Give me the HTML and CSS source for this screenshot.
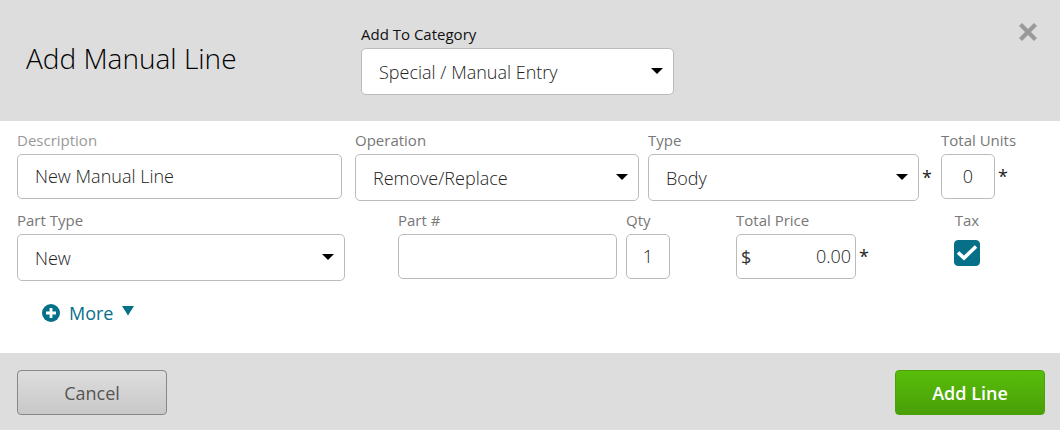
FILE: index.html
```
<!DOCTYPE html>
<html lang="en">
<head>
    <meta charset="UTF-8">
    <meta name="viewport" content="width=device-width, initial-scale=1.0">
    <title>Add Manual Line</title>
    <link rel="stylesheet" href="styles.css">
</head>
<body>
    <form class="dialog">
        <!-- Header -->
        <header class="dialog-header">
            <h1 class="dialog-title">Add Manual Line</h1>
            <div class="field category">
                <label for="category">Add To Category</label>
                <div class="select-wrap">
                    <select id="category" name="category">
                        <option>Special / Manual Entry</option>
                    </select>
                </div>
            </div>
            <button type="button" class="close-button" aria-label="Close">
                <svg width="20" height="20" viewBox="0 0 20 20">
                    <path d="M2.500 2.500L17.500 17.500M17.500 2.500L2.500 17.500" stroke="#999" stroke-width="4.200" fill="none"/>
                </svg>
            </button>
        </header>

        <!-- Line fields -->
        <main class="dialog-body">
            <div class="row row-operation">
                <div class="field description">
                    <label for="description">Description</label>
                    <input type="text" id="description" name="description" value="New Manual Line">
                </div>
                <div class="field">
                    <label for="operation">Operation</label>
                    <div class="select-wrap">
                        <select id="operation" name="operation">
                            <option>Remove/Replace</option>
                        </select>
                    </div>
                </div>
                <div class="field">
                    <label for="type">Type</label>
                    <div class="control">
                        <div class="select-wrap">
                            <select id="type" name="type">
                                <option>Body</option>
                            </select>
                        </div>
                        <span class="required">*</span>
                    </div>
                </div>
                <div class="field">
                    <label for="units">Total Units</label>
                    <div class="control">
                        <input type="text" id="units" name="units" class="units" value="0">
                        <span class="required">*</span>
                    </div>
                </div>
            </div>

            <div class="row row-part">
                <div class="field part-type">
                    <label for="part-type">Part Type</label>
                    <div class="select-wrap">
                        <select id="part-type" name="part-type">
                            <option>New</option>
                        </select>
                    </div>
                </div>
                <div class="field">
                    <label for="part-number">Part #</label>
                    <input type="text" id="part-number" name="part-number">
                </div>
                <div class="field">
                    <label for="qty">Qty</label>
                    <input type="text" id="qty" name="qty" class="qty" value="1">
                </div>
                <div class="field price">
                    <label for="price">Total Price</label>
                    <div class="control">
                        <div class="price-box">
                            <span>$</span>
                            <input type="text" id="price" name="price" value="0.00">
                        </div>
                        <span class="required">*</span>
                    </div>
                </div>
                <div class="field tax">
                    <label for="tax">Tax</label>
                    <div class="checkbox">
                        <input type="checkbox" id="tax" name="tax" checked>
                        <svg width="26" height="26" viewBox="0 0 26 26">
                            <path d="M4 12.500L10 18L22 6.500" stroke="#fff" stroke-width="3.600" fill="none"/>
                        </svg>
                    </div>
                </div>
            </div>

            <button type="button" class="more-button">
                <svg width="18" height="18" viewBox="0 0 18 18">
                    <circle cx="9" cy="9" r="9" fill="#077089"/>
                    <path d="M9 4V14M4 9H14" stroke="#fff" stroke-width="2.800"/>
                </svg>
                <span>More</span>
                <svg class="more-arrow" width="12" height="10" viewBox="0 0 12 10">
                    <path d="M0 0H12L6 9.500Z" fill="#077089"/>
                </svg>
            </button>
        </main>

        <!-- Footer -->
        <footer class="dialog-footer">
            <button type="button" class="button cancel">Cancel</button>
            <button type="submit" class="button submit">Add Line</button>
        </footer>
    </form>
</body>
</html>
```
FILE: styles.css
```
* {
    box-sizing: border-box;
}

body {
    margin: 0;
    font-family: "Open Sans", sans-serif;
    font-size: 18px;
    color: #333;
    background-color: #fff;
}

.dialog {
    display: flex;
    flex-direction: column;
    min-height: 100vh;
}

/* Header */
.dialog-header {
    display: grid;
    grid-template-columns: 335fr 313fr 364fr;
    padding: 22px 22px 26px 26px;
    background-color: #ddd;
}

.dialog-title {
    align-self: center;
    margin: 0;
    padding-bottom: 2px;
    font-size: 28px;
    font-weight: 350;
    line-height: 40px;
    color: #000;
}

.category {
    padding-top: 2px;
}

.category label {
    color: #111;
}

.close-button {
    align-self: start;
    justify-self: end;
    display: flex;
    padding: 0;
    border: none;
    background: none;
    cursor: pointer;
}

/* Fields */
.field label {
    display: block;
    margin-bottom: 4px;
    font-size: 15px;
    line-height: 20px;
}

.dialog-body {
    padding: 9px 15px 27px 17px;
}

.dialog-body label {
    color: #777;
}

.dialog-body .description label {
    color: #999;
}

.row {
    display: grid;
    column-gap: 9px;
    margin-bottom: 9px;
}

.row-operation {
    grid-template-columns: 329fr 284fr 284fr 104px;
}

.row-part {
    grid-template-columns: 372fr 219fr 44px 201px 156px;
}

input,
select {
    font-family: inherit;
    font-size: 18px;
    font-weight: 350;
    color: #222;
}

input[type="text"],
select {
    display: block;
    width: 100%;
    height: 45px;
    padding: 0 17px 1px;
    border: 1px solid #bbb;
    border-radius: 5px;
    background-color: #fff;
}

select {
    height: 47px;
    padding-bottom: 0;
    appearance: none;
}

.select-wrap {
    position: relative;
    flex: 1;
}

.select-wrap::after {
    content: "";
    position: absolute;
    top: 20px;
    right: 11px;
    border: 6px solid transparent;
    border-top-color: #000;
    border-bottom: none;
    pointer-events: none;
}

.control {
    display: flex;
    gap: 3px;
}

.required {
    align-self: center;
    padding-bottom: 1px;
    line-height: 24px;
    color: #222;
}

.description {
    padding-right: 4px;
}

input[type="text"].units {
    width: 54px;
    padding: 0 0 1px;
    text-align: center;
}

input[type="text"].qty {
    padding: 0 0 1px;
    text-align: center;
}

.part-type {
    padding-right: 44px;
}

.price {
    padding-left: 57px;
}

.price-box {
    display: flex;
    align-items: center;
    width: 120px;
    height: 45px;
    padding: 0 4px;
    border: 1px solid #bbb;
    border-radius: 5px;
}

.price-box input[type="text"] {
    flex: 1;
    min-width: 0;
    height: 43px;
    padding: 0 0 1px;
    border: none;
    text-align: right;
}

.tax {
    text-align: center;
}

.checkbox {
    position: relative;
    width: 26px;
    margin: 10px auto 0;
}

.checkbox input {
    display: block;
    width: 26px;
    height: 26px;
    margin: 0;
    border: 1px solid #077089;
    border-radius: 4px;
    appearance: none;
}

.checkbox input:checked {
    background-color: #077089;
}

.checkbox svg {
    position: absolute;
    top: 0;
    left: 0;
    pointer-events: none;
}

.more-button {
    display: flex;
    align-items: center;
    gap: 9px;
    margin: 0 0 0 25px;
    padding: 10px 0 0;
    border: none;
    background: none;
    font-family: inherit;
    font-size: 18px;
    line-height: 26px;
    color: #077089;
    cursor: pointer;
}

.more-arrow {
    margin-bottom: 5px;
}

/* Footer */
.dialog-footer {
    flex: 1;
    display: flex;
    justify-content: space-between;
    align-items: flex-start;
    padding: 17px 15px 15px 17px;
    background-color: #ddd;
}

.button {
    width: 150px;
    height: 45px;
    border-radius: 4px;
    font-family: inherit;
    font-size: 18px;
    font-weight: 600;
    cursor: pointer;
}

.cancel {
    border: 1px solid #888;
    background: linear-gradient(#ddd, #c8c8c8);
    font-weight: 500;
    color: #555;
}

.submit {
    border: 1px solid #4ba30a;
    background: linear-gradient(#58bd0a, #4a9f08);
    color: #fff;
}
```
